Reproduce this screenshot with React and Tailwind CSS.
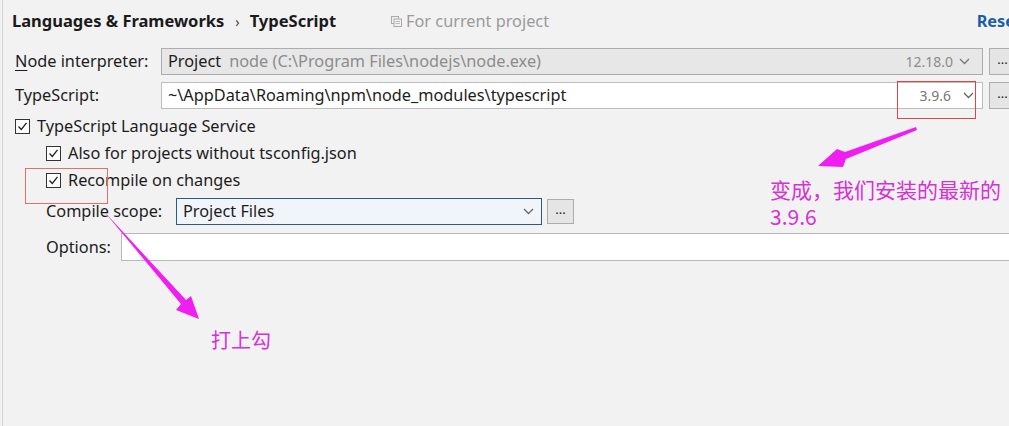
import React from "react";

const font = { fontFamily: '"Noto Sans", "Open Sans", sans-serif' };

function Check() {
  return (
    <div className="w-[15px] h-[15px] border border-[#333] bg-white flex items-center justify-center shrink-0">
      <svg width="11" height="11" viewBox="0 0 11 11">
        <path d="M1.5 5.5 L4.3 8.5 L9.5 1.8" fill="none" stroke="#222" strokeWidth="1.3" />
      </svg>
    </div>
  );
}

function Chevron({ color = "#666" }) {
  return (
    <svg width="11" height="7" viewBox="0 0 11 7">
      <path d="M1 1 L5.5 5.5 L10 1" fill="none" stroke={color} strokeWidth="1.3" />
    </svg>
  );
}

function Dots({ className }) {
  return (
    <div className={"flex items-center justify-center border border-[#adadad] bg-[#e5e5e5] text-[#222] text-[13px] leading-none pb-[4px] " + className}>
      ...
    </div>
  );
}

export default function App() {
  return (
    <div className="w-[1009px] h-[426px] bg-[#f2f2f2] relative overflow-hidden text-[16.3px] text-[#1c1c1c]" style={font}>
      <div className="absolute left-[2px] top-0 bottom-0 w-px bg-[#d4d4d4]" />
      <div className="flex flex-col">
        {/* header */}
        <div className="h-[42px] flex items-center pl-[12px]">
          <span className="font-bold text-[16.5px] text-[#1a1a1a]">Languages &amp; Frameworks</span>
          <span className="ml-[11px] mr-[10px] text-[#444] text-[14px]">›</span>
          <span className="font-bold text-[16.5px] text-[#1a1a1a]">TypeScript</span>
          <div className="ml-[55px] flex items-center text-[#9a9a9a]">
            <svg width="11" height="11" viewBox="0 0 11 11" className="mr-[4px]">
              <rect x="0.5" y="0.5" width="7" height="7" fill="none" stroke="#aaa" />
              <rect x="3" y="3" width="7.5" height="7.5" fill="#f2f2f2" stroke="#aaa" />
              <path d="M4.5 5.5h4.5M4.5 7.5h4.5" stroke="#bbb" />
            </svg>
            <span>For current project</span>
          </div>
          <div className="flex-1" />
          <span className="font-bold text-[#1a5fa6] mr-[-13px]">Reset</span>
        </div>

        {/* Node interpreter */}
        <div className="mt-[6px] h-[27px] flex items-center">
          <div className="w-[161px] pl-[15px] shrink-0">
            <span className="underline underline-offset-[3px]">N</span>ode interpreter:
          </div>
          <div className="w-[822px] shrink-0 h-full border border-[#adadad] bg-[#e7e7e7] flex items-center pl-[6px] pr-[12px]">
            <span className="text-[#1c1c1c]">Project</span>
            <span className="ml-[8px] text-[#8c8c8c]">node (C:\Program Files\nodejs\node.exe)</span>
            <div className="flex-1" />
            <span className="text-[#8c8c8c] text-[14px] mr-[6px]">12.18.0</span>
            <Chevron color="#777" />
          </div>
          <Dots className="ml-[6px] w-[27px] h-full shrink-0" />
        </div>

        {/* TypeScript */}
        <div className="mt-[7px] h-[27px] flex items-center">
          <div className="w-[161px] pl-[15px] shrink-0">TypeScript:</div>
          <div className="w-[822px] shrink-0 h-full border border-[#bdbdbd] bg-white flex items-center pl-[6px] pr-[8px]">
            <span>~\AppData\Roaming\npm\node_modules\typescript</span>
            <div className="flex-1" />
            <span className="text-[#777] text-[14px] mr-[12px]">3.9.6</span>
            <Chevron color="#666" />
          </div>
          <Dots className="ml-[6px] w-[27px] h-full shrink-0" />
        </div>

        {/* checkboxes */}
        <div className="mt-[4px] h-[27px] flex items-center pl-[15px] gap-[7px]">
          <Check />
          <span>TypeScript Language Service</span>
        </div>
        <div className="h-[27px] flex items-center pl-[46px] gap-[7px]">
          <Check />
          <span>Also for projects without tsconfig.json</span>
        </div>
        <div className="h-[27px] flex items-center pl-[46px] gap-[7px]">
          <Check />
          <span>Recompile on changes</span>
        </div>

        {/* Compile scope */}
        <div className="mt-[4px] h-[27px] flex items-center">
          <div className="w-[176px] pl-[46px] shrink-0">Compile scope:</div>
          <div className="w-[366px] shrink-0 h-full border border-[#2a5a86] bg-[#f1f5f9] flex items-center pl-[6px] pr-[7px]">
            <span>Project Files</span>
            <div className="flex-1" />
            <Chevron color="#666" />
          </div>
          <Dots className="ml-[5px] w-[27px] h-[25px] shrink-0" />
        </div>

        {/* Options */}
        <div className="mt-[8px] h-[28px] flex items-center">
          <div className="w-[121px] pl-[46px] shrink-0">Options:</div>
          <div className="w-[900px] shrink-0 h-full border border-[#b8b8b8] bg-white" />
        </div>
      </div>

      {/* annotations */}
      <div className="absolute left-[897px] top-[81px] w-[79px] h-[38px] border border-[#d84848]" />
      <div className="absolute left-[25px] top-[168px] w-[83px] h-[36px] border border-[#e07070]" />

      <svg className="absolute left-0 top-0" width="1009" height="426" viewBox="0 0 1009 426">
        <polygon points="916,127 845,152 837,149 818,166 843,167 846,159 917,130" fill="#f01ef0" />
        <polygon points="99,206 186,300 191,296 199,319 176,310 181,304 102,209" fill="#f01ef0" />
      </svg>

      <div
        className="absolute left-[770px] top-[176px] flex flex-col gap-[1px] text-[21px] leading-[26px] text-[#d830d8]"
        style={{ fontFamily: '"Noto Sans CJK SC", "Noto Sans", sans-serif' }}
      >
        <div>变成，我们安装的最新的</div>
        <div>3.9.6</div>
      </div>
      <div
        className="absolute left-[211px] top-[326px] text-[20px] leading-[27px] text-[#d830d8]"
        style={{ fontFamily: '"Noto Sans CJK SC", "Noto Sans", sans-serif' }}
      >
        打上勾
      </div>
    </div>
  );
}
